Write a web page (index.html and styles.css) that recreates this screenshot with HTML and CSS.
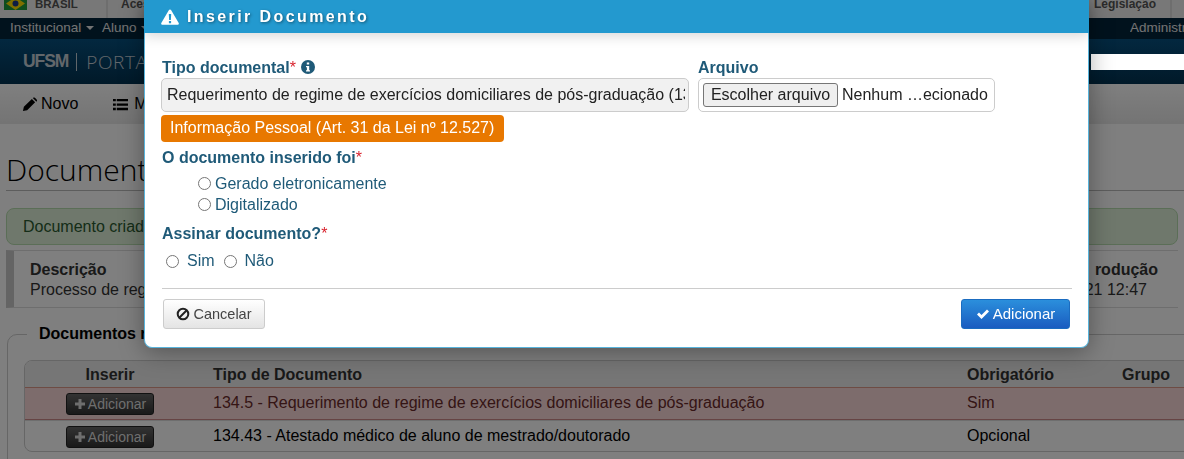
FILE: index.html
```html
<!DOCTYPE html>
<html lang="pt-BR">
<head>
<meta charset="utf-8">
<title>Inserir Documento</title>
<link rel="stylesheet" href="styles.css">
</head>
<body>
<div class="page">
  <div class="govbar">
    <div class="gov-brasil">
      <svg class="flag" viewBox="0 0 23 10"><rect width="23" height="10" fill="#1d9a3c"/><path d="M11.500 -3 21 3.500 11.500 10 2 3.500z" fill="#ffdf00"/><circle cx="11.500" cy="3.500" r="3" fill="#1b3a8a"/></svg>
      <span>BRASIL</span>
    </div>
    <div class="gov-link">Aces</div>
    <div class="gov-spacer"></div>
    <div class="gov-link gov-last">Legislação</div>
  </div>
  <nav class="topnav">
    <span>Institucional <i class="caret"></i></span>
    <span>Aluno <i class="caret"></i></span>
    <span class="topnav-right">Administr</span>
  </nav>
  <header class="brand">
    <span class="brand-ufsm">UFSM</span><span class="brand-sep"></span><span class="brand-portal">PORTA</span>
    <span class="brand-search"></span>
  </header>
  <div class="toolbar">
    <span class="tool">
      <svg class="ico" viewBox="0 0 16 16"><path d="M1 15l1-4.500L10.500 2l3.500 3.500L5.500 14z M11.500 1l1-.5q.7-.3 1.300.3l2 2q.5.6.2 1.200l-.6 1z" fill="#000"/></svg>
      Novo
    </span>
    <span class="tool tool-list">
      <svg class="ico" viewBox="0 0 16 16"><path d="M0 2h3v2.500H0zM4 2h12v2.500H4zM0 6.800h3v2.500H0zM4 6.800h12v2.500H4zM0 11.500h3V14H0zM4 11.500h12V14H4z" fill="#000"/></svg>
      M
    </span>
  </div>
  <main class="content">
    <h1 class="title">Document</h1>
    <div class="alert">Documento criad</div>
    <section class="info">
      <div class="info-col"><strong>Descrição</strong><span>Processo de reg</span></div>
      <div class="info-col info-end"><strong>rodução</strong><span>21 12:47</span></div>
    </section>
    <section class="docs">
      <h2 class="docs-legend">Documentos r</h2>
      <div class="docs-table">
        <div class="row row-head">
          <span class="c-ins">Inserir</span><span class="c-tipo">Tipo de Documento</span><span class="c-obr">Obrigatório</span><span>Grupo</span>
        </div>
        <div class="row row-req">
          <span class="c-ins"><span class="btn-dark"><svg class="ico-s" viewBox="0 0 12 12"><path d="M4.500 1h3v3.500H11v3H7.500V11h-3V7.500H1v-3h3.500z" fill="#ddd"/></svg>Adicionar</span></span>
          <span class="c-tipo">134.5 - Requerimento de regime de exercícios domiciliares de pós-graduação</span><span class="c-obr">Sim</span><span></span>
        </div>
        <div class="row">
          <span class="c-ins"><span class="btn-dark"><svg class="ico-s" viewBox="0 0 12 12"><path d="M4.500 1h3v3.500H11v3H7.500V11h-3V7.500H1v-3h3.500z" fill="#ddd"/></svg>Adicionar</span></span>
          <span class="c-tipo">134.43 - Atestado médico de aluno de mestrado/doutorado</span><span class="c-obr">Opcional</span><span></span>
        </div>
      </div>
    </section>
  </main>
</div>

<div class="backdrop"></div>

<div class="modal">
  <div class="modal-head">
    <svg class="warn" viewBox="0 0 18 16"><path d="M9 .5q.8 0 1.200.8l7.500 12.700q.5 1.500-1 1.700H1.300q-1.500-.2-1-1.700L7.800 1.300Q8.200.5 9 .5z" fill="#fff"/><path d="M7.800 5h2.400l-.3 6H8.100zM7.900 12h2.200v2.200H7.900z" fill="#2399cf"/></svg>
    <span>Inserir Documento</span>
  </div>
  <div class="modal-body">
    <div class="fields">
      <div class="field-tipo">
        <label class="lbl">Tipo documental<span class="req">*</span><svg class="info-ico" viewBox="0 0 14 14"><circle cx="7" cy="7" r="7" fill="#1f5a78"/><path d="M5.800 2.500h2.400v2H5.800zM5 6h3.200v4.200H9v1.300H5v-1.300h.9V7.300H5z" fill="#fff"/></svg></label>
        <div class="select"><div class="select-text">Requerimento de regime de exercícios domiciliares de pós-graduação (134.5)</div></div>
        <div class="badge">Informação Pessoal (Art. 31 da Lei nº 12.527)</div>
      </div>
      <div class="field-file">
        <label class="lbl">Arquivo</label>
        <div class="file">
          <span class="file-btn">Escolher arquivo</span>
          <span class="file-name">Nenhum …ecionado</span>
        </div>
      </div>
    </div>
    <label class="lbl lbl-q">O documento inserido foi<span class="req">*</span></label>
    <div class="radios-v">
      <label class="radio"><input type="radio" name="origem">Gerado eletronicamente</label>
      <label class="radio"><input type="radio" name="origem">Digitalizado</label>
    </div>
    <label class="lbl lbl-q2">Assinar documento?<span class="req">*</span></label>
    <div class="radios-h">
      <label class="radio-h"><input type="radio" name="assinar">Sim</label>
      <label class="radio-h"><input type="radio" name="assinar">Não</label>
    </div>
    <div class="modal-foot">
      <span class="btn btn-cancel">
        <svg class="ico-b" viewBox="0 0 14 14"><circle cx="7" cy="7" r="5.300" fill="none" stroke="#222" stroke-width="2"/><path d="M3.500 10.500l7-7" stroke="#222" stroke-width="2"/></svg>
        Cancelar
      </span>
      <span class="btn btn-add">
        <svg class="ico-b" viewBox="0 0 14 14"><path d="M1 7.500l2-2 2.500 2.500L11 2.500l2 2-7.500 7.500z" fill="#fff"/></svg>
        Adicionar
      </span>
    </div>
  </div>
</div>
</body>
</html>
```
FILE: styles.css
```css
* { box-sizing: border-box; }
html, body { margin: 0; height: 100%; overflow: hidden; }
body { font-family: "Liberation Sans", Arial, sans-serif; background: #fff; color: #000; font-size: 16px; }
.page { width: 1184px; height: 459px; overflow: hidden; }

.govbar { height: 18px; display: flex; background: #f1f1f1; font-weight: 700; color: #555; line-height: 8px; }
.gov-brasil { width: 108px; padding-left: 4px; display: flex; gap: 8px; border-right: 2px solid #ddd; font-size: 11.500px; }
.flag { width: 23px; height: 10px; }
.gov-link { padding-left: 13px; white-space: nowrap; font-size: 12px; }
.gov-spacer { flex: 1; }
.gov-last { width: 78px; padding-left: 0; border-right: 2px solid #ddd; margin-right: 12px; }

.topnav { height: 21px; background: #03243a; color: #e6e6e6; font-size: 13.500px; line-height: 20px; display: flex; gap: 8px; padding-left: 10px; }
.topnav-right { margin-left: auto; width: 54px; white-space: nowrap; overflow: hidden; }
.caret { display: inline-block; border-top: 4px solid #e6e6e6; border-left: 4px solid transparent; border-right: 4px solid transparent; vertical-align: middle; margin-left: 1px; }

.brand { height: 45px; background: linear-gradient(#06507f, #033352); padding-left: 23px; display: flex; align-items: center; color: #c4ced6; font-size: 19px; }
.brand-ufsm { font-weight: 700; font-size: 17.500px; letter-spacing: -1.100px; }
.brand-sep { width: 1px; height: 18px; background: #c0ccd4; margin: 0 9px 0 8px; }
.brand-portal { font-family: "Open Sans", sans-serif; font-weight: 300; letter-spacing: .6px; }
.brand-search { margin-left: auto; width: 93px; height: 16px; background: #fff; position: relative; z-index: 20; }

.toolbar { height: 40px; background: linear-gradient(#fff, #e8e8e8); display: flex; align-items: center; padding-left: 22px; gap: 35px; font-size: 16px; }
.tool { display: inline-flex; align-items: center; gap: 4px; }
.tool-list { gap: 6px; }
.ico { width: 15px; height: 15px; }

.content { padding: 0 6px; }
.title { margin: 28px 0 0; padding-bottom: 4px; height: 39px; font-family: "Open Sans", sans-serif; font-weight: 300; font-size: 30px; line-height: 35px; border-bottom: 1px solid #bbb; color: #000; width: 1300px; }
.alert { margin: 17px 0 0; height: 37px; line-height: 35px; padding-left: 16px; background: #dff0d8; border: 1px solid #b6dcae; border-radius: 8px; color: #2a5a30; font-size: 16px; }
.info { margin: 5px 0 0; height: 58px; border-left: 8px solid #c8c8c8; border-bottom: 1px solid #ddd; border-top: 1px solid #ddd; display: flex; justify-content: space-between; padding: 9px 26px 0 16px; background: #fff; font-size: 16px; line-height: 20px; color: #333; }
.info-col { display: flex; flex-direction: column; }
.info-col strong { color: #333; }
.info-end { width: 68px; white-space: nowrap; align-items: flex-end; margin-right: -6px; }
.info-end span { margin-right: 11px; }

.docs { margin: 26px -30px 0 1px; height: 140px; border: 1px solid #ccc; border-radius: 10px; padding: 25px 0 0 16px; position: relative; }
.docs-legend { position: absolute; top: -11px; left: 19px; margin: 0; padding: 0 12px; background: #fff; font-size: 16px; line-height: 20px; font-weight: 700; white-space: nowrap; }
.docs-table { width: 1180px; height: 92px; border: 1px solid #ccc; border-radius: 8px; overflow: hidden; }
.row { display: grid; grid-template-columns: 170px 773px 154px 80px; height: 32px; align-items: center; border-top: 1px solid #ddd; font-size: 16px; }
.row .c-tipo { padding-left: 18px; }
.row .c-obr { margin-left: -1px; }
.row-head { height: 26px; padding-top: 1px; border-top: 0; background: #ececec; font-weight: 700; color: #333; }
.row-req { background: #fbd9d9; color: #6a2a2a; border-top: 1px solid #d98; border-bottom: 1px solid #c88; height: 33px; }
.row:not(.row-head) .c-tipo, .row:not(.row-head) .c-obr { margin-top: -2px; }
.c-ins { text-align: center; }
.btn-dark { display: inline-flex; align-items: center; gap: 2px; width: 88px; height: 22px; justify-content: center; background: linear-gradient(#666, #333); border: 1px solid #222; border-radius: 3px; color: #ddd; font-size: 14px; font-weight: 400; vertical-align: middle; }
.ico-s { width: 12px; height: 12px; }

.backdrop { position: fixed; inset: 0; background: rgba(0,0,0,.5); z-index: 10; }

.modal { position: absolute; z-index: 30; left: 144px; top: 0; width: 945px; height: 348px; background: #fff; border: 1px solid #58b4dc; border-top: 0; border-radius: 0 0 8px 8px; box-shadow: 0 4px 24px rgba(0,0,0,.35); }
.modal-head { height: 33px; margin: 0 -1px; padding-left: 17px; background: #2399cf; display: flex; align-items: center; gap: 8px; color: #fff; font-size: 16px; font-weight: 700; letter-spacing: 2.400px; text-shadow: 1px 1px 3px rgba(0,0,0,.45); box-shadow: 0 2px 14px rgba(0,0,0,.18); }
.warn { width: 18px; height: 16px; }
.modal-body { padding: 25px 17px 0 17px; color: #1f5a78; }
.fields { display: flex; gap: 9px; }
.field-tipo { width: 527px; }
.field-file { width: 297px; }
.lbl { display: block; font-weight: 700; font-size: 16px; line-height: 20px; color: #1f5a78; }
.req { color: #d9232e; font-weight: 400; }
.info-ico { width: 14px; height: 14px; vertical-align: -1px; margin-left: 5px; }
.select { margin: 0 0 0 -1px; height: 34px; line-height: 32px; padding: 0 3px 0 5px; background: #f1f1f1; border: 1px solid #ccc; border-radius: 5px; color: #222; font-size: 16px; }
.select-text { white-space: nowrap; overflow: hidden; }
.badge { margin: 3px 0 0 -1px; height: 27px; width: 343px; line-height: 26px; padding-left: 9px; background: #e87800; border-radius: 4px; color: #fff; font-size: 16px; white-space: nowrap; }
.file { height: 34px; border: 1px solid #ccc; border-radius: 5px; display: flex; align-items: center; padding-left: 4px; color: #222; }
.file-btn { width: 135px; height: 24px; line-height: 22px; text-align: center; background: #efefef; border: 1px solid #767676; border-radius: 3px; margin-right: 4px; }
.file-name { white-space: nowrap; }
.lbl-q { margin-top: 6px; }
.radios-v { padding-left: 36px; margin-top: 5px; }
.radio { display: flex; align-items: center; gap: 4px; height: 21px; font-size: 16px; }
.radio input, .radio-h input { margin: 0; width: 13px; height: 13px; }
.lbl-q2 { margin-top: 9px; }
.radios-h { display: flex; gap: 9px; margin-top: 5px; padding-left: 4px; height: 24px; }
.radio-h { display: flex; align-items: center; gap: 8px; font-size: 16px; }
.modal-foot { margin-top: 15px; border-top: 1px solid #ccc; padding: 10px 2px 0 1px; display: flex; justify-content: space-between; width: 910px; }
.btn { display: inline-flex; align-items: center; justify-content: center; gap: 3px; height: 30px; padding-bottom: 1px; border-radius: 3px; font-size: 14.500px; }
.ico-b { width: 14px; height: 14px; }
.btn-cancel { width: 102px; background: linear-gradient(#fff, #e4e4e4); border: 1px solid #ccc; color: #444; }
.btn-add { width: 109px; background: linear-gradient(#2b8fdc, #1a5cc0); border: 1px solid #1b6cc0; color: #fff; font-size: 15px; }
```
